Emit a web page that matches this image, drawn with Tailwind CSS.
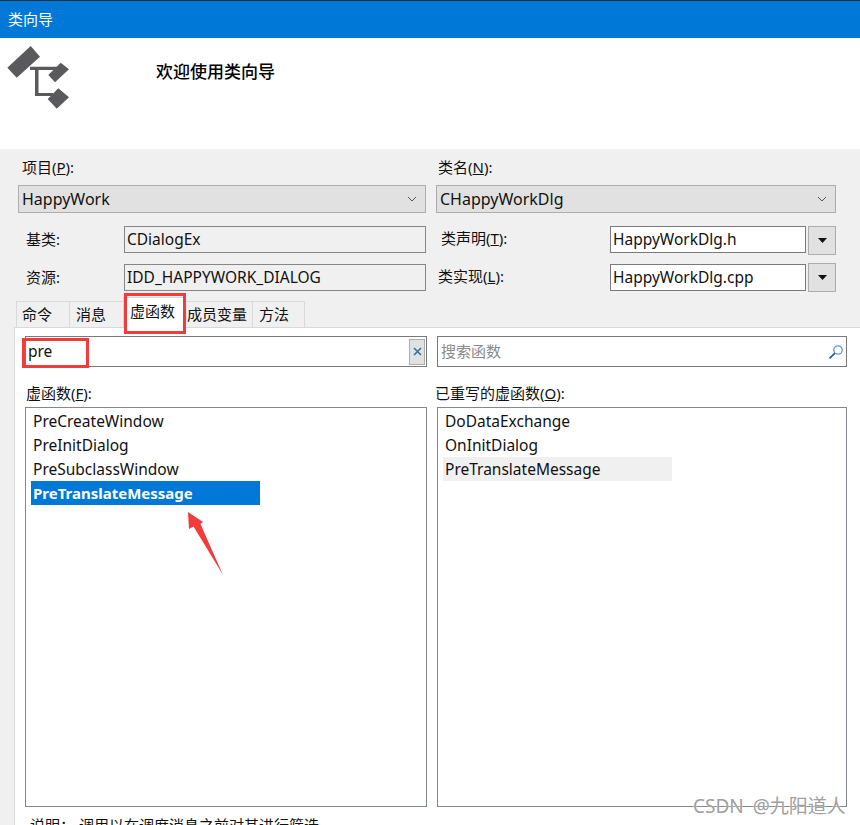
<!DOCTYPE html>
<html lang="zh-CN">
  <head>
    <meta charset="UTF-8" />
    <title>类向导</title>
    <script src="https://cdn.jsdelivr.net/npm/@tailwindcss/browser@4"></script>
  </head>
  <body class="relative w-[860px] h-[825px] overflow-hidden bg-[#f0f0f0] text-[15px] leading-[20px] text-[#111] font-['Noto_Sans','Noto_Sans_CJK_SC',sans-serif]">
    <!-- title bar -->
    <div class="h-[38px] bg-[#0078d7] border-t border-[#22303c] pl-2 pb-px flex items-center text-white">类向导</div>

    <!-- banner -->
    <div class="h-[111px] bg-white flex items-start">
      <svg class="w-[80px] h-[80px] mt-[4px] shrink-0 text-[#5a5a5c]" viewBox="0 42 80 80" fill="currentColor">
        <polygon points="30.7,46 40,56.7 16.7,77.7 7.3,67.7" />
        <polygon points="60.7,62.7 69,69.3 55,82.3 48.3,75" />
        <polygon points="58.3,88.3 69,97.3 56.7,108.7 47.7,99" />
        <path d="M30 66.7h28V70H38.5v23H53v3H35V70h-5z" />
      </svg>
      <div class="ml-[76px] mt-[24px] text-[17px] font-medium text-black">欢迎使用类向导</div>
    </div>

    <!-- class info -->
    <div class="grid grid-cols-[408px_400px] gap-x-[10px] pl-[18px]">
      <div>
        <div class="h-[36px] pl-1 pt-[8px]">项目(<span class="underline">P</span>):</div>
        <div class="h-[28px] bg-[#e1e1e1] border border-[#adadad] pl-[3px] pb-px flex items-center justify-between pr-[8px] text-[16px]">
          HappyWork
          <svg class="w-[10px] h-[6px] text-[#555]" viewBox="0 0 10 6" fill="none" stroke="currentColor"><path d="M1 1l4 4 4-4" /></svg>
        </div>
        <div class="mt-[13px] flex items-center h-[27px]">
          <div class="w-[106px] pl-[8px] pb-[2px]">基类:</div>
          <div class="flex-1 h-full border border-[#868686] pl-[2px] pb-[2px] flex items-center text-[15.5px]">CDialogEx</div>
        </div>
        <div class="mt-[11px] flex items-center h-[27px]">
          <div class="w-[106px] pl-[8px] pb-[2px]">资源:</div>
          <div class="flex-1 h-full border border-[#868686] pl-[2px] pb-[2px] flex items-center text-[15.5px]">IDD_HAPPYWORK_DIALOG</div>
        </div>
      </div>
      <div>
        <div class="h-[36px] pl-[2px] pt-[8px]">类名(<span class="underline">N</span>):</div>
        <div class="h-[28px] bg-[#e1e1e1] border border-[#adadad] pl-[3px] pb-px flex items-center justify-between pr-[8px] text-[16px]">
          CHappyWorkDlg
          <svg class="w-[10px] h-[6px] text-[#555]" viewBox="0 0 10 6" fill="none" stroke="currentColor"><path d="M1 1l4 4 4-4" /></svg>
        </div>
        <div class="mt-[13px] flex items-start h-[27px]">
          <div class="w-[174px] pl-[5px] pt-[2px]">类声明(<span class="underline">T</span>):</div>
          <div class="w-[196px] h-[27px] bg-white border border-[#7a7a7a] pl-[2px] pb-[2px] flex items-center text-[15.5px]">HappyWorkDlg.h</div>
          <div class="ml-[2px] w-[28px] h-[29px] bg-[#e1e1e1] border border-[#adadad] flex items-center justify-center">
            <svg class="w-[9px] h-[5px]" viewBox="0 0 9 5" fill="#111"><polygon points="0,0 9,0 4.5,5" /></svg>
          </div>
        </div>
        <div class="mt-[11px] flex items-start h-[27px]">
          <div class="w-[174px] pl-[2px] pt-[2px]">类实现(<span class="underline">L</span>):</div>
          <div class="w-[196px] h-[27px] bg-white border border-[#7a7a7a] pl-[2px] pb-[2px] flex items-center text-[15.5px]">HappyWorkDlg.cpp</div>
          <div class="ml-[2px] w-[28px] h-[29px] -mt-px bg-[#e1e1e1] border border-[#adadad] flex items-center justify-center">
            <svg class="w-[9px] h-[5px]" viewBox="0 0 9 5" fill="#111"><polygon points="0,0 9,0 4.5,5" /></svg>
          </div>
        </div>
      </div>
    </div>

    <!-- tabs -->
    <div class="mt-[10px] pl-[16px] h-[26px] flex items-end relative z-10">
      <div class="w-[54px] h-[26px] border border-b-0 border-[#d9d9d9] pl-[5px] pt-[2px]">命令</div>
      <div class="w-[54px] h-[26px] border-y border-r border-b-0 border-[#d9d9d9] pl-[6px] pt-[2px]">消息</div>
      <div class="w-[62px] h-[31px] -mb-px -ml-[1px] bg-white border border-b-0 border-[#d9d9d9] pl-[6px] pt-[3px]">虚函数</div>
      <div class="w-[68px] h-[26px] border-t border-r border-[#d9d9d9] border-b-0 pl-[2px] pt-[2px] whitespace-nowrap">成员变量</div>
      <div class="w-[52px] h-[26px] border-t border-r border-[#d9d9d9] border-b-0 pl-[6px] pt-[2px]">方法</div>
    </div>

    <!-- tab panel -->
    <div class="ml-[14px] h-[520px] bg-white border-t border-l border-[#d9d9d9] pt-[8px] pl-[10px]">
      <div class="grid grid-cols-[402px_410px] gap-x-[10px]">
        <div class="h-[31px] border border-[#7a7a7a] flex items-center justify-between pl-[2px] pr-px">
          <span class="pb-[2px] text-[15.5px]">pre</span>
          <div class="w-[16px] h-[26px] bg-[#e1e1e1] border border-[#adadad] flex items-center justify-center">
            <svg class="w-[9px] h-[9px] text-[#3a6ea5]" viewBox="0 0 9 9" fill="none" stroke="currentColor" stroke-width="1.6"><path d="M1 1l7 7M8 1l-7 7" /></svg>
          </div>
        </div>
        <div class="h-[31px] border border-[#7a7a7a] flex items-center justify-between pl-[3px] pr-[2px] text-[#8a8a8a]">
          <span class="pb-[2px]">搜索函数</span>
          <svg class="w-[16px] h-[16px]" viewBox="0 0 16 16" fill="none"><circle cx="10" cy="6" r="4.2" stroke="#5b9bd5" stroke-width="1.3" /><path d="M6.8 9.2L1.6 14.4" stroke="#2a5b9b" stroke-width="1.8" /></svg>
        </div>
        <div class="h-[40px] pl-px pt-[16px]">虚函数(<span class="underline">F</span>):</div>
        <div class="h-[40px] -ml-[2px] pt-[16px]">已重写的虚函数(<span class="underline">O</span>):</div>
        <div class="h-[400px] border border-[#828790] pt-px pl-[5px] text-[15.5px]">
          <div class="h-[24px] pl-[2px] leading-[24px]">PreCreateWindow</div>
          <div class="h-[24px] pl-[2px] leading-[24px]">PreInitDialog</div>
          <div class="h-[24px] pl-[2px] leading-[24px]">PreSubclassWindow</div>
          <div class="h-[24px] w-[229px] pl-[2px] leading-[24px] bg-[#0078d7] text-white text-[15px] font-bold">PreTranslateMessage</div>
        </div>
        <div class="h-[400px] border border-[#828790] pt-px pl-[5px] text-[15.5px]">
          <div class="h-[24px] pl-[2px] leading-[24px]">DoDataExchange</div>
          <div class="h-[24px] pl-[2px] leading-[24px]">OnInitDialog</div>
          <div class="h-[24px] w-[229px] pl-[2px] leading-[24px] bg-[#f0f0f0]">PreTranslateMessage</div>
        </div>
      </div>
      <div class="mt-[8px] pl-[5px]">说明：&nbsp;调用以在调度消息之前对其进行筛选</div>
    </div>

    <!-- red annotations -->
    <div class="absolute left-[124px] top-[293px] w-[62px] h-[41px] border-[3px] border-[#f23c3c] z-20"></div>
    <div class="absolute left-[22px] top-[338px] w-[67px] h-[30px] border-[3px] border-[#f23c3c] z-20"></div>
    <svg class="absolute left-0 top-0 z-20" width="860" height="825" fill="#f23c3c"><polygon points="188,512 203,522 200.5,524 223,575 193.5,526.5 189,529" /></svg>

    <!-- watermark -->
    <div class="absolute left-[693px] top-[795px] z-30 flex items-center text-[19px] leading-[22px] text-[#a0a0a0] [text-shadow:0_0_2px_#fff] whitespace-nowrap">CSDN<span class="ml-[9px]">@九阳道人</span></div>
  </body>
</html>
